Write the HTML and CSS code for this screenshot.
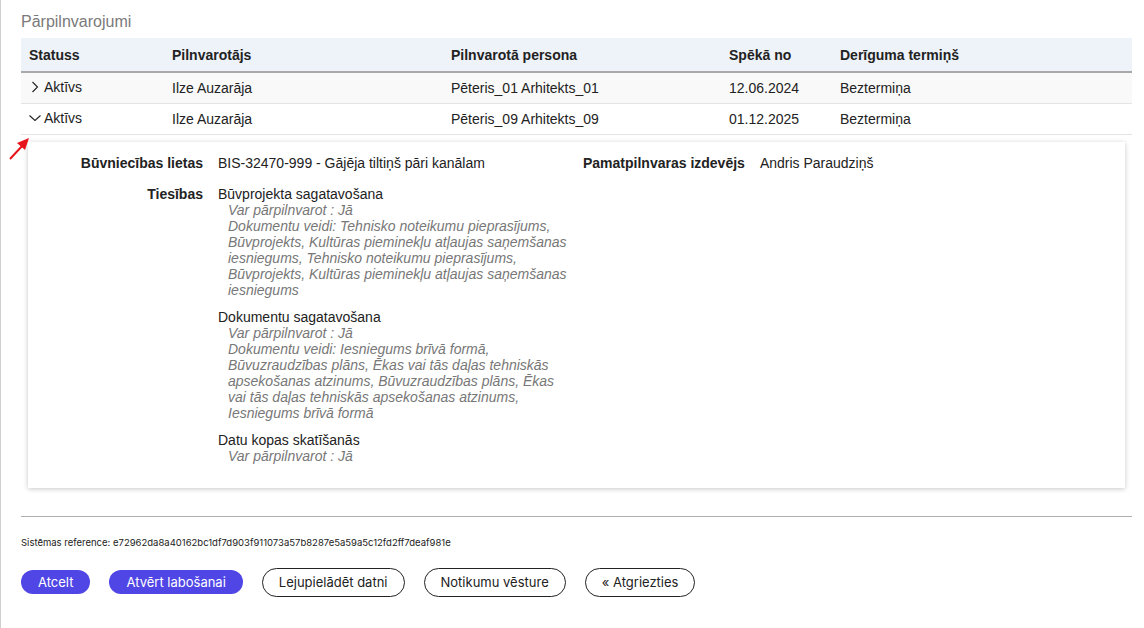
FILE: index.html
```html
<!DOCTYPE html>
<html lang="lv">
<head>
<meta charset="utf-8">
<title>Pārpilnvarojumi</title>
<link rel="stylesheet" href="styles.css">
</head>
<body>
<div class="page">
  <h2 class="title">Pārpilnvarojumi</h2>
  <table class="grid">
    <thead>
      <tr>
        <th class="c1">Statuss</th>
        <th class="c2">Pilnvarotājs</th>
        <th class="c3">Pilnvarotā persona</th>
        <th class="c4">Spēkā no</th>
        <th class="c5">Derīguma termiņš</th>
      </tr>
    </thead>
    <tbody>
      <tr class="row odd">
        <td><span class="status"><svg class="chev" width="12" height="12" viewBox="0 0 12 12"><path d="M3.5 1 L8.5 6 L3.5 11" fill="none" stroke="#222" stroke-width="1.1"/></svg>Aktīvs</span></td>
        <td>Ilze Auzarāja</td>
        <td>Pēteris_01 Arhitekts_01</td>
        <td>12.06.2024</td>
        <td>Beztermiņa</td>
      </tr>
      <tr class="row">
        <td><span class="status"><svg class="chev" width="12" height="12" viewBox="0 0 12 12"><path d="M0.5 3.5 L6 8.5 L11.5 3.5" fill="none" stroke="#222" stroke-width="1.1"/></svg>Aktīvs</span></td>
        <td>Ilze Auzarāja</td>
        <td>Pēteris_09 Arhitekts_09</td>
        <td>01.12.2025</td>
        <td>Beztermiņa</td>
      </tr>
      <tr class="detail-row">
        <td colspan="5" class="detail-cell">
          <div class="card">
            <div class="lbl">Būvniecības lietas</div>
            <div class="val">BIS-32470-999 - Gājēja tiltiņš pāri kanālam</div>
            <div class="lbl">Pamatpilnvaras izdevējs</div>
            <div class="val">Andris Paraudziņš</div>

            <div class="lbl">Tiesības</div>
            <div class="val">
              <div class="right">
                <div class="right-name">Būvprojekta sagatavošana</div>
                <div class="right-sub">Var pārpilnvarot : Jā</div>
                <div class="right-sub">Dokumentu veidi: Tehnisko noteikumu pieprasījums, Būvprojekts, Kultūras pieminekļu atļaujas saņemšanas iesniegums, Tehnisko noteikumu pieprasījums, Būvprojekts, Kultūras pieminekļu atļaujas saņemšanas iesniegums</div>
              </div>
              <div class="right">
                <div class="right-name">Dokumentu sagatavošana</div>
                <div class="right-sub">Var pārpilnvarot : Jā</div>
                <div class="right-sub">Dokumentu veidi: Iesniegums brīvā formā, Būvuzraudzības plāns, Ēkas vai tās daļas tehniskās apsekošanas atzinums, Būvuzraudzības plāns, Ēkas vai tās daļas tehniskās apsekošanas atzinums, Iesniegums brīvā formā</div>
              </div>
              <div class="right">
                <div class="right-name">Datu kopas skatīšanās</div>
                <div class="right-sub">Var pārpilnvarot : Jā</div>
              </div>
            </div>
            <div></div>
            <div></div>
          </div>
        </td>
      </tr>
    </tbody>
  </table>

  <hr class="sep">
  <div class="ref">Sistēmas reference: e72962da8a40162bc1df7d903f911073a57b8287e5a59a5c12fd2ff7deaf981e</div>
  <div class="actions">
    <button class="btn primary">Atcelt</button>
    <button class="btn primary">Atvērt labošanai</button>
    <button class="btn outline">Lejupielādēt datni</button>
    <button class="btn outline">Notikumu vēsture</button>
    <button class="btn outline">« Atgriezties</button>
  </div>

  <svg class="arrow" width="26" height="26" viewBox="0 0 26 26">
    <line x1="2" y1="23" x2="15" y2="9" stroke="#e8141c" stroke-width="2"/>
    <polygon points="21,2 9,7 17,14" fill="#e8141c"/>
  </svg>
</div>
</body>
</html>
```
FILE: styles.css
```css
* { box-sizing: border-box; }
html, body { margin: 0; padding: 0; background: #fff; }
body {
  font-family: "Liberation Sans", Arial, sans-serif;
  color: #222;
  font-size: 14px;
  border-left: 1px solid #cfcfcf;
  min-height: 628px;
}
.page {
  position: relative;
  padding: 12px 12px 0 20px;
}
.title {
  margin: 0 0 6px;
  font-size: 16px;
  line-height: 20px;
  font-weight: normal;
  color: #7a7a7a;
}
.grid {
  width: 100%;
  border-collapse: collapse;
  font-size: 14px;
}
.grid th {
  background: #eef3fa;
  text-align: left;
  font-weight: bold;
  height: 34px;
  padding: 0 8px;
  border-bottom: 2px solid #a9a9a9;
  color: #222;
}
.c1 { width: 143px; }
.c2 { width: 279px; }
.c3 { width: 278px; }
.c4 { width: 111px; }
.grid td {
  height: 31px;
  padding: 0 8px;
  border-bottom: 1px solid #e4e4e4;
  vertical-align: middle;
}
.row.odd td { background: #f9f9f9; }
.status {
  display: inline-flex;
  align-items: center;
  gap: 3px;
}
.chev { display: block; }
.grid td.detail-cell {
  height: auto;
  padding: 7px 7px 8px 7px;
  border-bottom: none;
}
.card {
  box-shadow: 0 1px 5px rgba(0,0,0,0.22);
  background: #fff;
  padding: 13px 20px 24px 20px;
  display: grid;
  grid-template-columns: 155px 350px auto 1fr;
  column-gap: 15px;
  row-gap: 15px;
  line-height: 16px;
  font-size: 14px;
}
.lbl {
  font-weight: bold;
  text-align: right;
  color: #222;
}
.right { margin-bottom: 11px; }
.right:last-child { margin-bottom: 0; }
.right-name { color: #222; }
.right-sub {
  font-style: italic;
  color: #777;
  padding-left: 10px;
}
.sep {
  border: none;
  border-top: 1px solid #b0b0b0;
  margin: 20px 0 0;
}
.ref {
  font-family: Inter, "Liberation Sans", sans-serif;
  font-size: 9.5px;
  color: #222;
  margin-top: 20px;
  line-height: 12px;
}
.actions {
  display: flex;
  align-items: center;
  gap: 19px;
  margin-top: 19px;
}
.btn {
  font-family: Inter, "Liberation Sans", sans-serif;
  font-size: 13px;
  border-radius: 999px;
  cursor: pointer;
  line-height: 16px;
}
.btn.primary {
  background: #4f46e5;
  color: #fff;
  border: none;
  height: 24px;
  padding: 0 17px;
}
.btn.outline {
  background: #fff;
  color: #222;
  border: 1px solid #222;
  height: 29px;
  padding: 0 16px;
}
.arrow {
  position: absolute;
  left: 7px;
  top: 136px;
}
```
